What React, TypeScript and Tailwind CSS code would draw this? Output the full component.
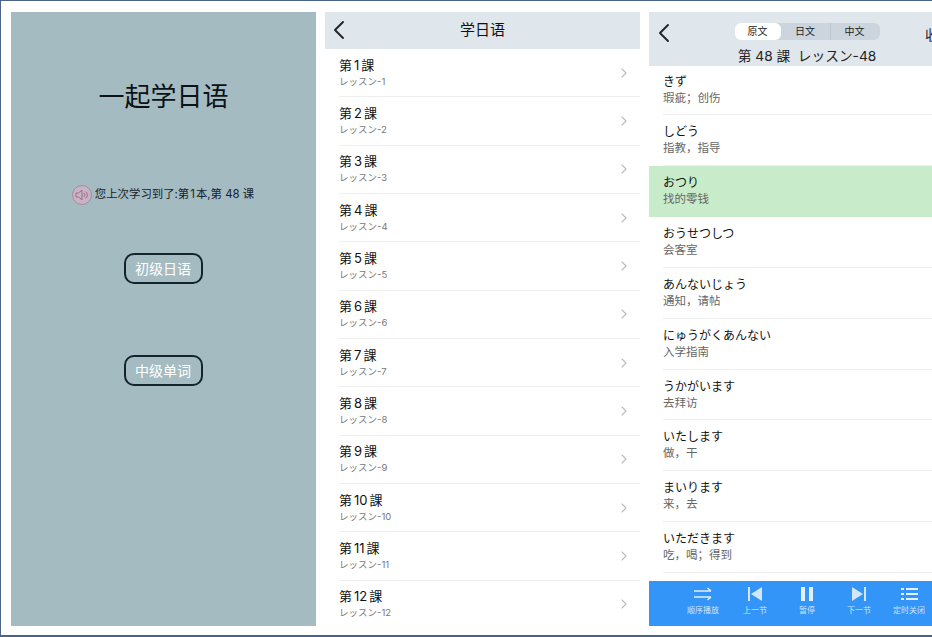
import { ChevronLeft, ChevronRight } from "lucide-react";

const cjk = "font-['Inter','Noto_Sans_CJK_SC',sans-serif]";

const lessons = Array.from({ length: 12 }, (_, i) => i + 1);

const words = [
  { jp: "きず", cn: "瑕疵；创伤" },
  { jp: "しどう", cn: "指教，指导" },
  { jp: "おつり", cn: "找的零钱", active: true },
  { jp: "おうせつしつ", cn: "会客室" },
  { jp: "あんないじょう", cn: "通知，请帖" },
  { jp: "にゅうがくあんない", cn: "入学指南" },
  { jp: "うかがいます", cn: "去拜访" },
  { jp: "いたします", cn: "做，干" },
  { jp: "まいります", cn: "来，去" },
  { jp: "いただきます", cn: "吃，喝；得到" },
];

const SpeakerIcon = () => (
  <div className="flex h-5 w-5 items-center justify-center rounded-full border border-[#a98aa0] bg-[#c9b3c4]">
    <svg width="14" height="12" viewBox="0 0 14 12" fill="none" stroke="#9a6f8c" strokeWidth="1">
      <path d="M1 4h2.5L7 1.2v9.6L3.5 8H1z" />
      <path d="M9 4a3 3 0 0 1 0 4M10.8 2.6a5 5 0 0 1 0 6.8" />
    </svg>
  </div>
);

const HomeButton = ({ label }: { label: string }) => (
  <button className="h-[31px] w-[79px] rounded-[10px] border-2 border-[#14242c] text-center text-[14px] text-white">
    {label}
  </button>
);

const HomePanel = () => (
  <div className="flex h-[614px] w-[305px] shrink-0 flex-col items-center bg-[#a5bbc2]">
    <h1 className="mt-[67px] h-9 text-[26px] leading-9 font-normal text-[#0b1114]">一起学日语</h1>
    <div className="mt-[70px] flex h-5 items-center gap-[3px] pr-[1px] text-[11.4px] text-[#16222a]">
      <SpeakerIcon />
      <span>
        您上次学习到了:第<span className="mx-[1px]">1</span>本,第 48 课
      </span>
    </div>
    <div className="mt-[48px] flex flex-col items-center gap-[71px] pr-[1px]">
      <HomeButton label="初级日语" />
      <HomeButton label="中级单词" />
    </div>
  </div>
);

const LessonPanel = () => (
  <div className="flex h-[614px] w-[315px] shrink-0 flex-col overflow-hidden bg-white">
    <div className="relative flex h-[37px] shrink-0 items-center justify-center bg-[#dfe6ec] text-[15px] text-[#111]">
      <ChevronLeft className="absolute top-[2px] left-[-2px] text-[#222]" size={32} strokeWidth={1.4} />
      学日语
    </div>
    {lessons.map((n) => (
      <div key={n} className="flex h-[48.35px] shrink-0 items-center pl-[14px]">
        <div className="flex h-full flex-1 items-center border-b border-[#eeeeee] pr-[8px]">
          <div className="mb-[2px] flex-1">
            <div className="text-[13px] leading-[18px] text-[#111]">
              第<span className="mx-[2px]">{n}</span>課
            </div>
            <div className="mt-[2px] text-[9.5px] leading-[12px] text-[#777]">レッスン-{n}</div>
          </div>
          <ChevronRight className="text-[#bbbbbb]" size={16} strokeWidth={1.6} />
        </div>
      </div>
    ))}
  </div>
);

const PlayerButton = ({ label, children }: { label: string; children: React.ReactNode }) => (
  <div className="flex w-[52px] shrink-0 flex-col items-center">
    <div className="flex h-[18px] items-center">{children}</div>
    <span className="mt-[2px] text-[8px] leading-[11px] text-[#cfe4fb]">{label}</span>
  </div>
);

const PlayerBar = () => (
  <div className="flex h-[45px] shrink-0 items-center bg-[#3395f7] pb-[6px] pl-[28px]">
    <PlayerButton label="顺序播放">
      <svg width="20" height="14" viewBox="0 0 20 14" fill="none" stroke="#e2effc" strokeWidth="1.5">
        <path d="M1 4h17M14.5 1l3.5 3M1 10h17M14.5 13l3.5-3" />
      </svg>
    </PlayerButton>
    <PlayerButton label="上一节">
      <svg width="14" height="14" viewBox="0 0 14 14" fill="#d3e6fb">
        <path d="M0 0h2v14H0zM14 0v14L3 7z" />
      </svg>
    </PlayerButton>
    <PlayerButton label="暂停">
      <svg width="14" height="14" viewBox="0 0 14 14" fill="#e2effc">
        <path d="M1 0h4v14H1zM9 0h4v14H9z" />
      </svg>
    </PlayerButton>
    <PlayerButton label="下一节">
      <svg width="14" height="14" viewBox="0 0 14 14" fill="#d3e6fb">
        <path d="M0 0v14l11-7zM12 0h2v14h-2z" />
      </svg>
    </PlayerButton>
    <div className="-ml-[2px]">
      <PlayerButton label="定时关闭">
        <svg width="17" height="14" viewBox="0 0 17 14" fill="#e2effc">
          <path d="M0 1h3v2H0zM5 1h12v2H5zM0 6h3v2H0zM5 6h12v2H5zM0 11h3v2H0zM5 11h12v2H5z" />
        </svg>
      </PlayerButton>
    </div>
  </div>
);

const WordPanel = () => (
  <div className="flex h-[614px] w-[283px] shrink-0 flex-col overflow-hidden bg-white">
    <div className="relative flex h-[54px] shrink-0 flex-col items-center bg-[#dfe6ec] pt-[11px] pl-[33px]">
      <ChevronLeft className="absolute top-[5px] left-[-1px] text-[#222]" size={32} strokeWidth={1.4} />
      <div className="flex h-[20px] w-[145px] rounded-md bg-[#ccd5dd] text-[10px] text-[#222]">
        <div className="flex w-[46px] items-center justify-center rounded-md bg-white">原文</div>
        <div className="flex w-[50px] items-center justify-center border-r border-[#bcc6cf]">日文</div>
        <div className="flex w-[48px] items-center justify-center">中文</div>
      </div>
      <div className="mt-[6px] text-[13.7px] leading-[20px] whitespace-nowrap text-[#222]">第 48 課&nbsp; レッスン-48</div>
      <span className="absolute top-[13px] left-[276px] text-[14px] leading-[20px] text-[#222]">收</span>
    </div>
    <div className="flex-1 overflow-hidden">
      {words.map((w) =>
        w.active ? (
          <div key={w.jp} className="flex h-[51px] flex-col justify-center bg-[#c8ecca] pl-[14px]">
            <div className="text-[12px] leading-[17px] text-[#111]">{w.jp}</div>
            <div className="text-[11.5px] leading-[17px] text-[#666]">{w.cn}</div>
          </div>
        ) : (
          <div key={w.jp} className="ml-[14px] flex h-[50.9px] flex-col justify-center border-b border-[#eeeeee] first:h-[49px]">
            <div className="text-[12px] leading-[17px] text-[#111]">{w.jp}</div>
            <div className="text-[11.5px] leading-[17px] text-[#666]">{w.cn}</div>
          </div>
        ),
      )}
    </div>
    <PlayerBar />
  </div>
);

export default function App() {
  return (
    <div className={`h-[637px] w-[932px] overflow-hidden border-t border-b-2 border-l border-[#4a6587] bg-white ${cjk}`}>
      <div className="flex gap-[9px] pt-[11px] pl-[10px]">
        <HomePanel />
        <LessonPanel />
        <WordPanel />
      </div>
    </div>
  );
}
